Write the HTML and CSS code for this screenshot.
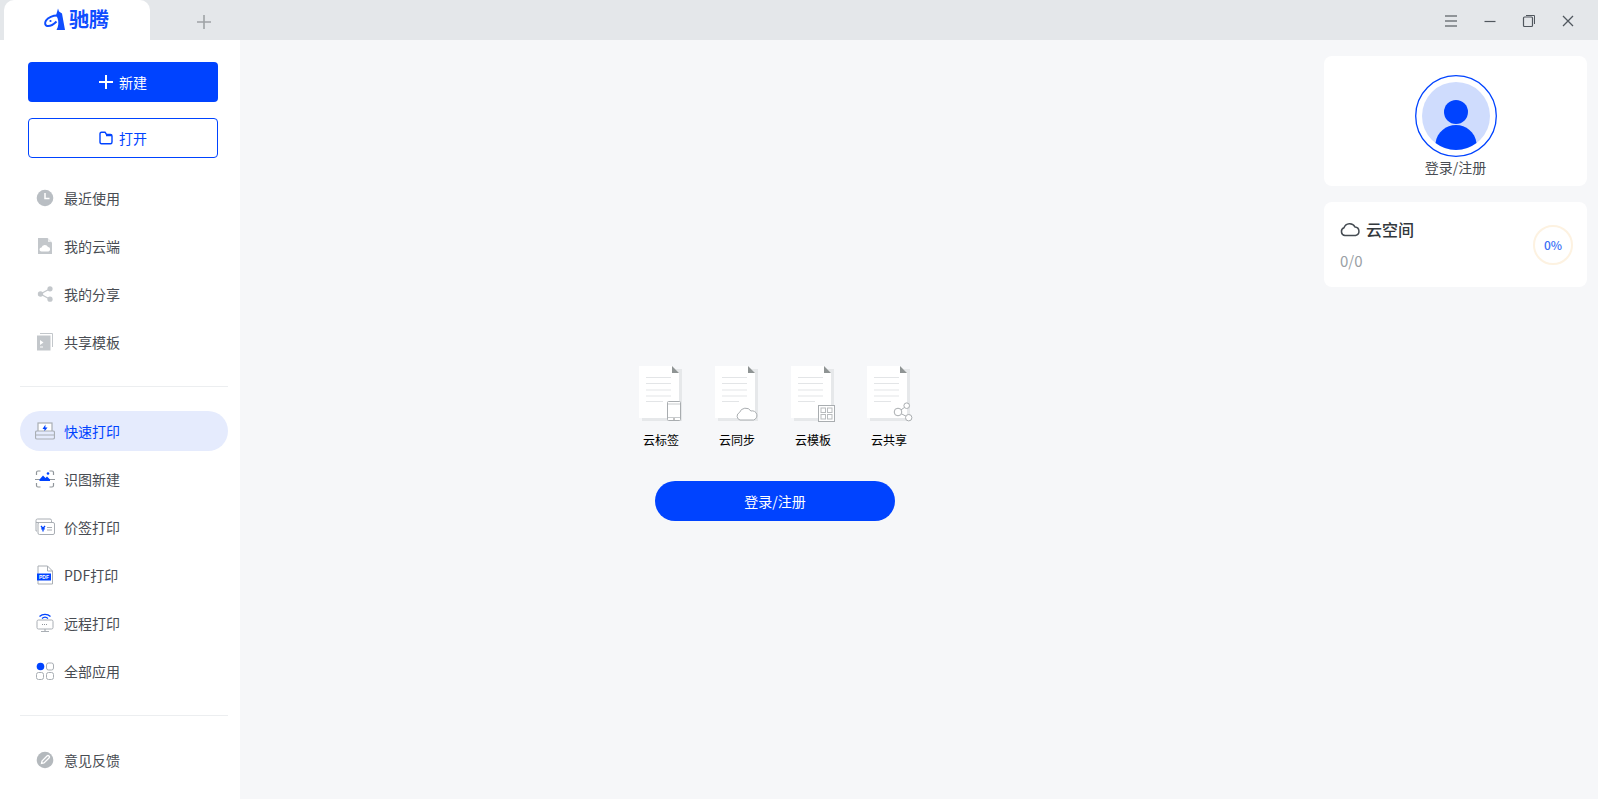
FILE: index.html
```html
<!DOCTYPE html>
<html lang="zh-CN">
<head>
  <meta charset="UTF-8" />
  <title>驰腾</title>
  <link rel="stylesheet" href="styles.css">
</head>
<body>

  <svg class="defs" width="0" height="0">
    <symbol id="doc" viewBox="0 0 44 58">
      <rect x="3" y="3" width="40" height="52" fill="#e6e8ea"/>
      <path d="M0 0H33L40 7V52H0Z" fill="#fff"/>
      <path d="M33 0L40 7H33Z" fill="#8f9494"/>
      <path d="M7 11.500H32M7 17.500H32M7 24H32M7 30H32M7 35.500H24" stroke="#e3e5e7" stroke-width="1"/>
    </symbol>
  </svg>

  <header class="titlebar">
    <div class="tab">
      <svg class="logo" width="24" height="24" viewBox="0 0 24 24">
        <path d="M15 1.500L16 4.500L19 6.500L22 23H13.500C15.500 19.500 16 15 14.500 11L13 8.500Z" fill="#0f4dff"/>
        <path d="M14 8.500C10 8.500 5 10.500 3 13.500C1.500 16 2 18.500 4 19C6.500 19.500 10 18 13.500 14.500" fill="none" stroke="#0f4dff" stroke-width="2"/>
        <circle cx="7.500" cy="14" r="1.100" fill="#0f4dff"/>
      </svg>
      <span class="brand">驰腾</span>
    </div>
    <svg class="add-tab" width="16" height="16" viewBox="0 0 16 16"><path d="M8 1V15M1 8H15" stroke="#9ea3a6" stroke-width="1.600"/></svg>
    <div class="win-btns">
      <svg width="14" height="14" viewBox="0 0 14 14"><path d="M1 2H13M1 7H13M1 12H13" stroke="#8f9498" stroke-width="2"/></svg>
      <svg width="14" height="14" viewBox="0 0 14 14"><path d="M1.500 7.500H12.500" stroke="#50575e" stroke-width="1.200"/></svg>
      <svg width="14" height="14" viewBox="0 0 14 14"><rect x="1.500" y="3" width="9" height="9.500" rx="1" fill="none" stroke="#50575e" stroke-width="1.200"/><path d="M4 1.500H12.500V10" fill="none" stroke="#50575e" stroke-width="1"/></svg>
      <svg width="14" height="14" viewBox="0 0 14 14"><path d="M2 2L12 12M12 2L2 12" stroke="#50575e" stroke-width="1.300"/></svg>
    </div>
  </header>

  <div class="layout">
    <nav class="sidebar">
      <button class="btn btn-new">
        <svg width="14" height="14" viewBox="0 0 14 14"><path d="M7 0V14M0 7H14" stroke="#fff" stroke-width="2"/></svg>
        新建
      </button>
      <button class="btn btn-open">
        <svg width="14" height="14" viewBox="0 0 14 14"><path d="M1 3C1 2 1.500 1.200 2.500 1.200H6L7.500 3.500H11.500C12.500 3.500 13 4 13 5V11C13 12 12.500 12.800 11.500 12.800H2.500C1.500 12.800 1 12 1 11ZM7 4.500H13" fill="none" stroke="#0043ff" stroke-width="1.400"/></svg>
        打开
      </button>

      <ul class="menu">
        <li class="menu-item">
          <svg width="18" height="18" viewBox="0 0 18 18"><circle cx="9" cy="9" r="8.300" fill="#b9bec3"/><path d="M9 4V9.500H13.500" fill="none" stroke="#fff" stroke-width="1.500"/></svg>
          最近使用
        </li>
        <li class="menu-item">
          <svg width="18" height="18" viewBox="0 0 18 18"><path d="M2 1H11.500L16 5.500V17H2Z" fill="#c3c7cb"/><path d="M12 1.500L15.500 5H12Z" fill="#eef0f1"/><path d="M5.500 14.500A2 2 0 0 1 5.500 10.500A3.500 3.500 0 0 1 12 10A2.300 2.300 0 0 1 12.500 14.500Z" fill="#fff"/></svg>
          我的云端
        </li>
        <li class="menu-item">
          <svg width="18" height="18" viewBox="0 0 18 18"><path d="M14 3.800L4.500 9L14 14.200" fill="none" stroke="#c3c7cb" stroke-width="1.300"/><circle cx="4.500" cy="9" r="2.700" fill="#c3c7cb"/><circle cx="14" cy="3.800" r="2.600" fill="#c3c7cb"/><circle cx="14" cy="14.200" r="2.600" fill="#c3c7cb"/></svg>
          我的分享
        </li>
        <li class="menu-item">
          <svg width="18" height="18" viewBox="0 0 18 18"><path d="M4 0.500H16.500V14" fill="none" stroke="#c3c7cb" stroke-width="1"/><rect x="1" y="2.500" width="13.500" height="15" fill="#c3c7cb"/><path d="M4 7V12L7.500 9.500Z" fill="#fff"/><path d="M4 14H7" stroke="#fff"/></svg>
          共享模板
        </li>
      </ul>

      <hr class="divider">

      <ul class="menu">
        <li class="menu-item active">
          <svg class="icon-wide" width="20" height="18" viewBox="0 0 20 18"><rect x="3" y="1" width="14" height="10" fill="#fff" stroke="#a9aeb4" stroke-width="1.200"/><path d="M10.500 2.500L7.500 7H9.500L9 10L12.500 5.500H10.300Z" fill="#0043ff"/><rect x="0.500" y="9" width="19" height="8" rx="1.500" fill="#e5ebfd" stroke="#a9aeb4" stroke-width="1.200"/><path d="M1 13H19" stroke="#a9aeb4"/></svg>
          <span class="blue">快速打印</span>
        </li>
        <li class="menu-item">
          <svg class="icon-wide" width="20" height="18" viewBox="0 0 20 18"><path d="M1.500 5V2.500Q1.500 1 3 1H5.500M14.500 1H17Q18.500 1 18.500 2.500V5M18.500 13V15.500Q18.500 17 17 17H14.500M5.500 17H3Q1.500 17 1.500 15.500V13" fill="none" stroke="#8f959a" stroke-width="1.200"/><path d="M0 9.500H20" stroke="#8f959a"/><path d="M4.500 9.500L8 5.500L10.500 8L12 6.500L15 9.500V11H4.500Z" fill="#0043ff"/><circle cx="13" cy="3.500" r="1.300" fill="#0043ff"/></svg>
          识图新建
        </li>
        <li class="menu-item">
          <svg class="icon-wide" width="20" height="18" viewBox="0 0 20 18"><path d="M2 13H1V2.500Q1 1 2.500 1H15Q16.500 1 16.500 2.500V4" fill="none" stroke="#a9aeb4"/><path d="M1 4.500H15.500" stroke="#a9aeb4"/><rect x="3" y="4.500" width="16.500" height="12" rx="1.500" fill="#fff" stroke="#a9aeb4"/><path d="M6 8L8 10.500L10 8M6.200 10.800H9.800M8 10.500V13.500" fill="none" stroke="#0043ff" stroke-width="1.300"/><path d="M12 9.500H17M12 12H17" stroke="#a9aeb4"/></svg>
          价签打印
        </li>
        <li class="menu-item">
          <svg width="18" height="20" viewBox="0 0 18 20"><path d="M2 1H11.500L16.500 6V19H2Z" fill="#fff" stroke="#a9aeb4"/><path d="M11.500 1V6H16.500" fill="none" stroke="#a9aeb4"/><rect x="1" y="8.500" width="14" height="7" fill="#0043ff"/><text class="pdf-tag" x="8" y="14">PDF</text></svg>
          PDF打印
        </li>
        <li class="menu-item">
          <svg width="18" height="20" viewBox="0 0 18 20"><path d="M3.500 3.500A8 8 0 0 1 14.500 3.500M6 5.500A4.500 4.500 0 0 1 12 5.500" fill="none" stroke="#0043ff" stroke-width="1.300"/><rect x="1" y="7" width="16" height="9" rx="1.500" fill="#fff" stroke="#a9aeb4"/><path d="M6 11.500H12" stroke="#8f959a" stroke-dasharray="1 1"/><path d="M9 16V18.500M5 18.500H13" stroke="#a9aeb4" stroke-width="1.200"/></svg>
          远程打印
        </li>
        <li class="menu-item">
          <svg width="18" height="18" viewBox="0 0 18 18"><circle cx="4.500" cy="4.500" r="3.800" fill="#0043ff"/><rect x="10.500" y="1" width="7" height="7" rx="2" fill="none" stroke="#a9aeb4"/><rect x="0.500" y="10.500" width="7" height="7" rx="2" fill="none" stroke="#a9aeb4"/><rect x="10.500" y="10.500" width="7" height="7" rx="2" fill="none" stroke="#a9aeb4"/></svg>
          全部应用
        </li>
      </ul>

      <hr class="divider">

      <ul class="menu">
        <li class="menu-item">
          <svg width="18" height="18" viewBox="0 0 18 18"><circle cx="9" cy="9" r="8.300" fill="#b4b9bd"/><path d="M5.500 12.500L6 10L11 5A1.400 1.400 0 0 1 13 7L8 12Z" fill="none" stroke="#fff" stroke-width="1.300"/></svg>
          意见反馈
        </li>
      </ul>
    </nav>

    <main class="content">
      <div class="features">
        <div class="feature">
          <svg width="44" height="58" viewBox="0 0 44 58">
            <use href="#doc"/>
            <rect x="28.500" y="35.500" width="13" height="19" rx="1" fill="#fff" stroke="#a9adb0"/>
            <path d="M29 38H41M29 51.500H41" stroke="#c8cbcd"/>
            <circle cx="35" cy="53" r="0.800" fill="#777"/>
          </svg>
          <span>云标签</span>
        </div>
        <div class="feature">
          <svg width="44" height="58" viewBox="0 0 44 58">
            <use href="#doc"/>
            <path d="M25 54A4 4 0 0 1 24.500 46.500A6.500 6.500 0 0 1 36 45A4.500 4.500 0 0 1 38.500 54Z" fill="#fff" stroke="#a9adb0"/>
          </svg>
          <span>云同步</span>
        </div>
        <div class="feature">
          <svg width="44" height="58" viewBox="0 0 44 58">
            <use href="#doc"/>
            <rect x="27.500" y="39.500" width="16" height="16" fill="#fff" stroke="#a9adb0"/>
            <rect x="30" y="42" width="4.500" height="4.500" fill="none" stroke="#b9bcbe"/>
            <rect x="36.500" y="42" width="4.500" height="4.500" fill="none" stroke="#b9bcbe"/>
            <rect x="30" y="48.500" width="4.500" height="4.500" fill="none" stroke="#b9bcbe"/>
            <rect x="36.500" y="48.500" width="4.500" height="4.500" fill="none" stroke="#b9bcbe"/>
          </svg>
          <span>云模板</span>
        </div>
        <div class="feature">
          <svg class="overflow" width="44" height="58" viewBox="0 0 44 58">
            <use href="#doc"/>
            <path d="M39.500 40L31 46L41.500 51.500" fill="none" stroke="#a9adb0"/>
            <circle cx="31" cy="46" r="3.800" fill="#fff" stroke="#a9adb0"/>
            <circle cx="39.700" cy="39.700" r="2.800" fill="#fff" stroke="#a9adb0"/>
            <circle cx="41.700" cy="51.700" r="3.200" fill="#fff" stroke="#a9adb0"/>
          </svg>
          <span>云共享</span>
        </div>
      </div>
      <button class="btn-login">登录/注册</button>
    </main>

    <aside class="panel">
      <div class="card card-user">
        <svg width="82" height="82" viewBox="0 0 82 82">
          <circle cx="41" cy="41" r="40.300" fill="#fff" stroke="#0043ff" stroke-width="1.300"/>
          <circle cx="41" cy="41" r="34" fill="#cfdcfd"/>
          <circle cx="41" cy="37" r="12" fill="#0043ff"/>
          <path d="M20.500 68C22 57 31 50 41 50C51 50 60 57 61.500 68A34 34 0 0 1 20.500 68Z" fill="#0043ff"/>
        </svg>
        <span class="user-name">登录/注册</span>
      </div>
      <div class="card card-space">
        <div class="space-info">
          <div class="space-title">
            <svg width="20" height="16" viewBox="0 0 20 16"><path d="M5 14.500A4 4 0 0 1 4 6.800A6 6 0 0 1 15 6A4.300 4.300 0 0 1 15.500 14.500Z" fill="none" stroke="#444b52" stroke-width="1.500"/></svg>
            云空间
          </div>
          <div class="space-used">0/0</div>
        </div>
        <div class="ring">0%</div>
      </div>
    </aside>
  </div>

</body>
</html>
```

FILE: styles.css
```css
* {
  box-sizing: border-box;
}

body {
  font-family: "Noto Sans CJK SC", "Noto Sans", sans-serif;
  background: #f6f7f9;
  margin: 0;
  height: 799px;
  overflow: hidden;
  color: #484c52;
}

.defs {
  position: absolute;
}

.titlebar {
  height: 40px;
  background: #e4e7ea;
  display: flex;
  align-items: center;
  padding-left: 4px;
}

.tab {
  width: 146px;
  height: 40px;
  background: #fff;
  border-radius: 10px 10px 0 0;
  display: flex;
  align-items: center;
  padding: 0 0 2px 39px;
  gap: 2px;
}

.brand {
  font-size: 20px;
  font-weight: 700;
  line-height: 24px;
  color: #0f4dff;
}

.add-tab {
  margin: 4px 0 0 46px;
}

.win-btns {
  margin-left: auto;
  padding: 0 23px 0 0;
  display: flex;
  gap: 25px;
  align-items: center;
  margin-top: 2px;
}

.layout {
  display: flex;
  height: 759px;
}

.sidebar {
  width: 240px;
  background: #fff;
  padding: 22px 12px 0 20px;
}

.btn {
  display: flex;
  align-items: center;
  justify-content: center;
  gap: 6px;
  width: 190px;
  height: 40px;
  margin-left: 8px;
  border-radius: 4px;
  font-family: inherit;
  font-size: 14px;
  cursor: pointer;
}

.btn-new {
  background: #0043ff;
  border: none;
  color: #fff;
  margin-bottom: 16px;
}

.btn-open {
  background: #fff;
  border: 1px solid #0043ff;
  color: #0043ff;
}

.menu {
  list-style: none;
  margin: 20px 0 0;
  padding: 0;
}

.divider + .menu {
  margin-top: 0;
}

.menu-item {
  width: 208px;
  height: 40px;
  margin-bottom: 8px;
  border-radius: 20px;
  display: flex;
  align-items: center;
  font-size: 14px;
  padding-left: 16px;
  line-height: 38px;
}

.menu-item svg {
  margin-right: 10px;
  flex: none;
}

.menu-item .icon-wide {
  margin-left: -1px;
  margin-right: 9px;
}

.menu-item.active {
  background: #e5ebfd;
}

.blue {
  color: #0043ff;
}

.pdf-tag {
  font-family: "Liberation Sans", sans-serif;
  font-size: 5px;
  font-weight: 700;
  fill: #fff;
  text-anchor: middle;
}

.divider {
  width: 208px;
  border: none;
  border-top: 1px solid #eceef0;
  margin: 24px 0;
}

.content {
  flex: 1;
  display: flex;
  flex-direction: column;
  align-items: center;
  padding-top: 326px;
}

.features {
  display: flex;
}

.feature {
  width: 76px;
  display: flex;
  flex-direction: column;
  align-items: center;
  font-size: 12px;
  line-height: 16px;
  color: #000;
}

.feature svg {
  margin-bottom: 8px;
}

.overflow {
  overflow: visible;
}

.btn-login {
  width: 240px;
  height: 40px;
  margin-top: 33px;
  border: none;
  border-radius: 20px;
  background: #0043ff;
  color: #fff;
  font-family: inherit;
  font-size: 14px;
  cursor: pointer;
}

.panel {
  width: 288px;
  padding: 16px 11px 0 14px;
}

.card {
  background: #fff;
  border-radius: 8px;
}

.card-user {
  height: 130px;
  padding-top: 19px;
  display: flex;
  flex-direction: column;
  align-items: center;
}

.user-name {
  font-size: 14px;
  line-height: 20px;
}

.card-space {
  height: 85px;
  margin-top: 16px;
  padding: 0 14px 0 16px;
  display: flex;
  align-items: center;
  justify-content: space-between;
}

.space-info {
  padding-bottom: 2px;
}

.space-title {
  display: flex;
  align-items: center;
  gap: 6px;
  font-size: 16px;
  font-weight: 500;
  line-height: 24px;
  color: #33383d;
}

.space-used {
  font-size: 15px;
  line-height: 20px;
  color: #9a9fa5;
  margin-top: 10px;
}

.ring {
  width: 40px;
  height: 40px;
  border: 2px solid #fdf2e1;
  border-radius: 50%;
  display: flex;
  align-items: center;
  justify-content: center;
  font-size: 12px;
  font-weight: 500;
  color: #3a6ff6;
}
```
